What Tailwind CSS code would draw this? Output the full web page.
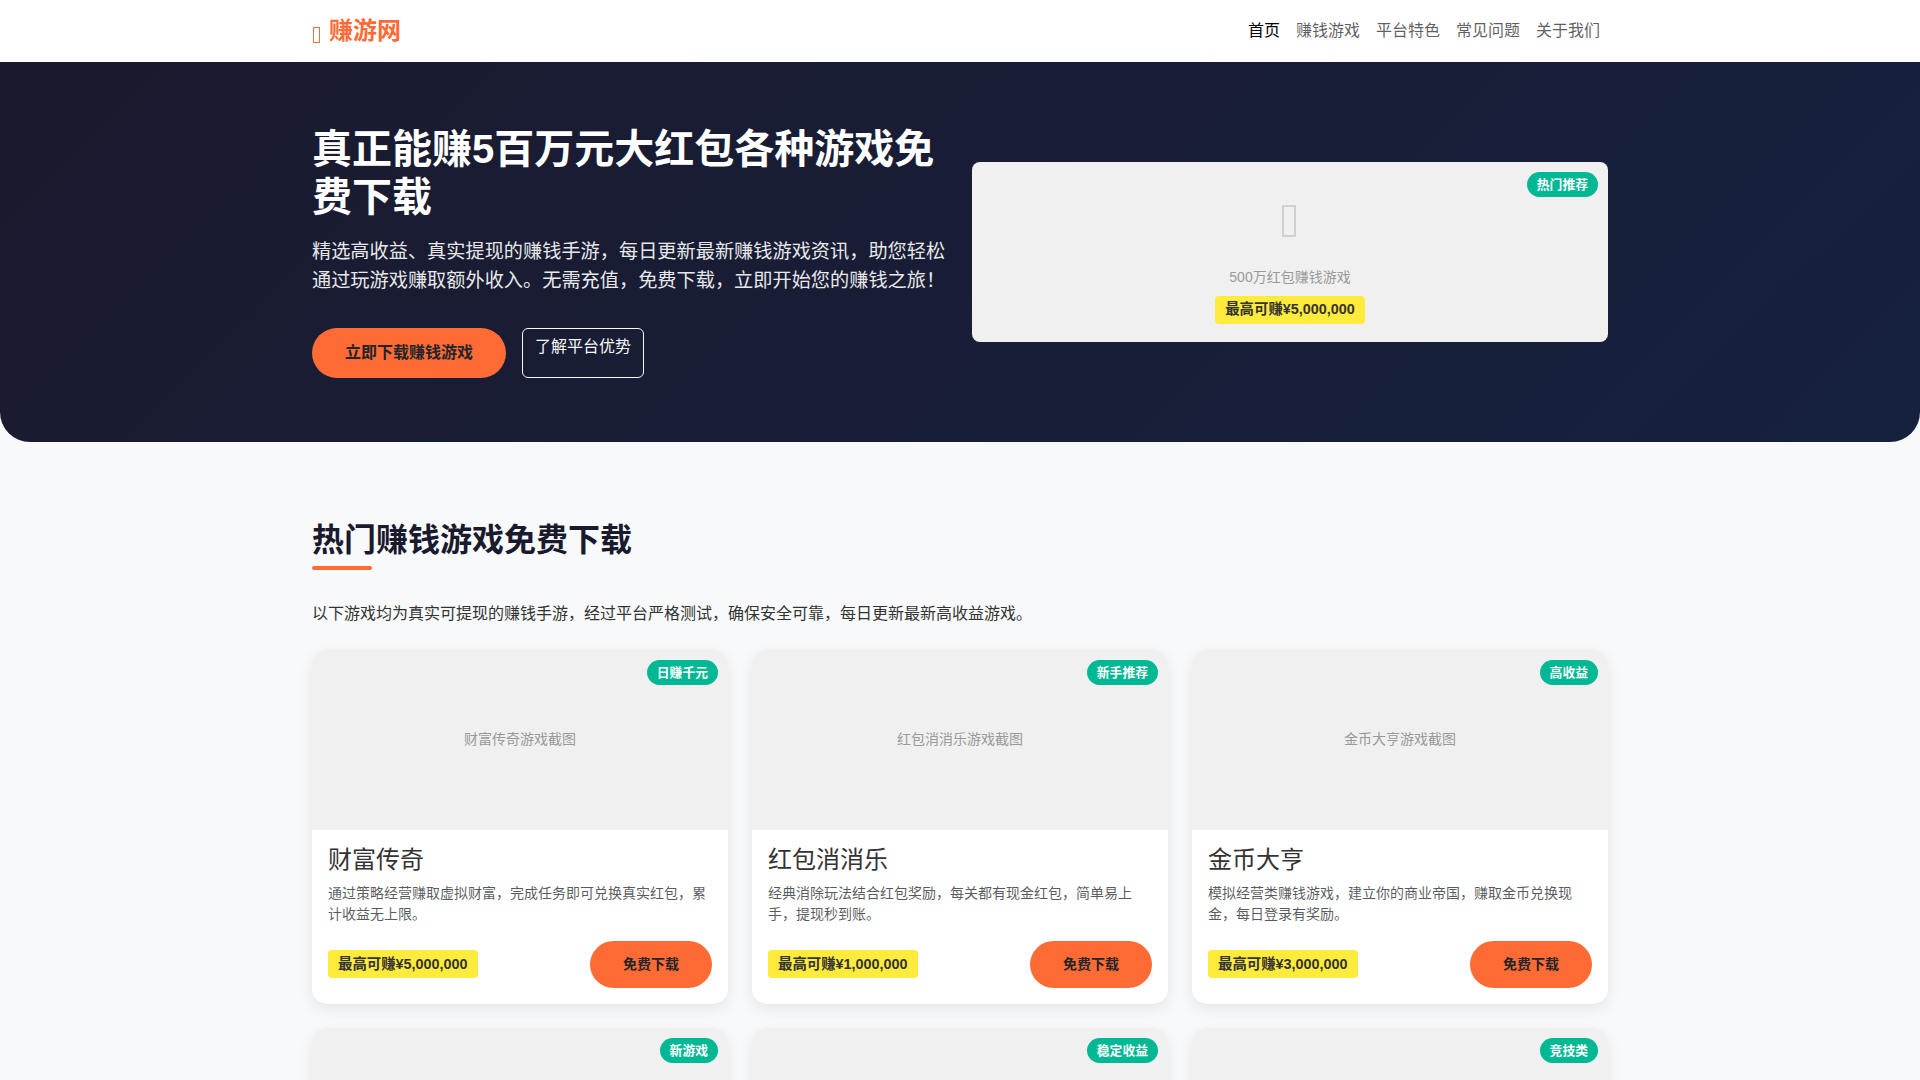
<!DOCTYPE html>
<html lang="zh-CN">
<head>
    <meta charset="UTF-8">
    <meta name="viewport" content="width=device-width, initial-scale=1.0">
    <title>赚游网</title>
    <script src="https://cdn.jsdelivr.net/npm/@tailwindcss/browser@4"></script>
</head>
<body class="bg-[#f8f9fa] text-[#333] text-base font-['Liberation_Sans','Noto_Sans_CJK_SC',sans-serif]">

    <!-- Navbar -->
    <nav class="bg-white h-[62px]">
        <div class="max-w-[1320px] h-full mx-auto px-3 flex items-center justify-between">
            <a href="#" class="flex items-center text-2xl font-bold text-[#ff6b35]">
                <span class="w-[7px] h-4 ml-px mt-2 mr-[9px] border border-[#ff6b35]"></span>
                赚游网
            </a>
            <ul class="flex text-black/65">
                <li><a href="#" class="px-2 text-black">首页</a></li>
                <li><a href="#games" class="px-2">赚钱游戏</a></li>
                <li><a href="#features" class="px-2">平台特色</a></li>
                <li><a href="#faq" class="px-2">常见问题</a></li>
                <li><a href="#about" class="px-2">关于我们</a></li>
            </ul>
        </div>
    </nav>

    <!-- Hero -->
    <section class="py-16 text-white rounded-b-[30px] bg-[linear-gradient(135deg,#1a1a2e_0%,#16213e_100%)]">
        <div class="max-w-[1320px] mx-auto px-3 grid grid-cols-2 gap-6 items-center">
            <div>
                <h1 class="text-[40px] leading-[1.2] font-bold -mt-px mb-[17px]">真正能赚5百万元大红包各种游戏免费下载</h1>
                <p class="text-[19.2px] leading-[1.5] mb-8 opacity-90">精选高收益、真实提现的赚钱手游，每日更新最新赚钱游戏资讯，助您轻松通过玩游戏赚取额外收入。无需充值，免费下载，立即开始您的赚钱之旅！</p>
                <div class="flex gap-4">
                    <a href="#games" class="px-[33px] py-[13px] rounded-[50px] bg-[#ff6b35] text-[#212529] font-semibold">立即下载赚钱游戏</a>
                    <a href="#features" class="px-3 py-1.5 border border-[#f8f9fa] rounded-md text-[#f8f9fa]">了解平台优势</a>
                </div>
            </div>
            <div class="relative h-[180px] rounded-lg bg-[#f0f0f0] text-[#999] text-sm leading-[21px] flex flex-col items-center">
                <span class="absolute top-2.5 right-2.5 px-2.5 py-[3px] rounded-[15px] bg-[#00b894] text-white text-[12.8px] leading-[19px] font-bold">热门推荐</span>
                <span class="w-3.5 h-8 mt-[43px] mr-0.5 mb-[30px] border-2 border-[#d0d0d0]"></span>
                <div>500万红包赚钱游戏</div>
                <div class="mt-2 px-2.5 pt-0.5 pb-1 rounded bg-[#ffeb3b] text-[#333] text-[14.4px] leading-[22px] font-bold">最高可赚¥5,000,000</div>
            </div>
        </div>
    </section>

    <!-- Games -->
    <section id="games" class="pt-[79px] pb-20">
        <div class="max-w-[1320px] mx-auto px-3">
            <h2 class="relative text-[32px] leading-[1.2] font-bold text-[#1a1a2e] mb-[42px] after:absolute after:left-0 after:-bottom-[11px] after:w-[60px] after:h-1 after:rounded-xs after:bg-[#ff6b35]">热门赚钱游戏免费下载</h2>
            <p class="leading-[26px] mb-[23px]">以下游戏均为真实可提现的赚钱手游，经过平台严格测试，确保安全可靠，每日更新最新高收益游戏。</p>
            <div id="gamelist" class="grid grid-cols-3 gap-6"></div>
        </div>
    </section>

    <script>
        const games = [
            { name: "财富传奇", tag: "日赚千元", money: "5,000,000", text: "通过策略经营赚取虚拟财富，完成任务即可兑换真实红包，累计收益无上限。" },
            { name: "红包消消乐", tag: "新手推荐", money: "1,000,000", text: "经典消除玩法结合红包奖励，每关都有现金红包，简单易上手，提现秒到账。" },
            { name: "金币大亨", tag: "高收益", money: "3,000,000", text: "模拟经营类赚钱游戏，建立你的商业帝国，赚取金币兑换现金，每日登录有奖励。" },
            { name: "幸运农场", tag: "新游戏", money: "2,000,000", text: "种植作物收获金币，轻松经营自己的农场，金币可兑换现金红包。" },
            { name: "答题达人", tag: "稳定收益", money: "1,500,000", text: "每日答题赢取奖励，知识变现金，答对越多收益越高。" },
            { name: "棋王争霸", tag: "竞技类", money: "4,000,000", text: "在线对战竞技赢红包，每周排位赛发放丰厚现金奖励。" }
        ];

        document.getElementById("gamelist").innerHTML = games.map(game => `
            <div class="bg-white rounded-[15px] overflow-hidden shadow-[0_5px_15px_rgba(0,0,0,0.08)]">
                <div class="relative h-[180px] pb-0.5 bg-[#f0f0f0] text-[#999] text-sm flex items-center justify-center">
                    <span class="absolute top-2.5 right-2.5 px-2.5 py-[3px] rounded-[15px] bg-[#00b894] text-white text-[12.8px] leading-[19px] font-bold">${game.tag}</span>
                    ${game.name}游戏截图
                </div>
                <div class="p-4">
                    <h5 class="text-2xl leading-[1.2] mb-2">${game.name}</h5>
                    <p class="text-sm leading-[21px] text-[#212529]/75 mb-4">${game.text}</p>
                    <div class="flex items-center justify-between">
                        <span class="mb-px px-2.5 py-[3px] rounded bg-[#ffeb3b] text-[14.4px] leading-[22px] font-bold">最高可赚¥${game.money}</span>
                        <a href="#" class="px-[33px] py-[13px] rounded-[50px] bg-[#ff6b35] text-[#212529] text-sm leading-[21px] font-semibold">免费下载</a>
                    </div>
                </div>
            </div>
        `).join("");
    </script>
</body>
</html>
